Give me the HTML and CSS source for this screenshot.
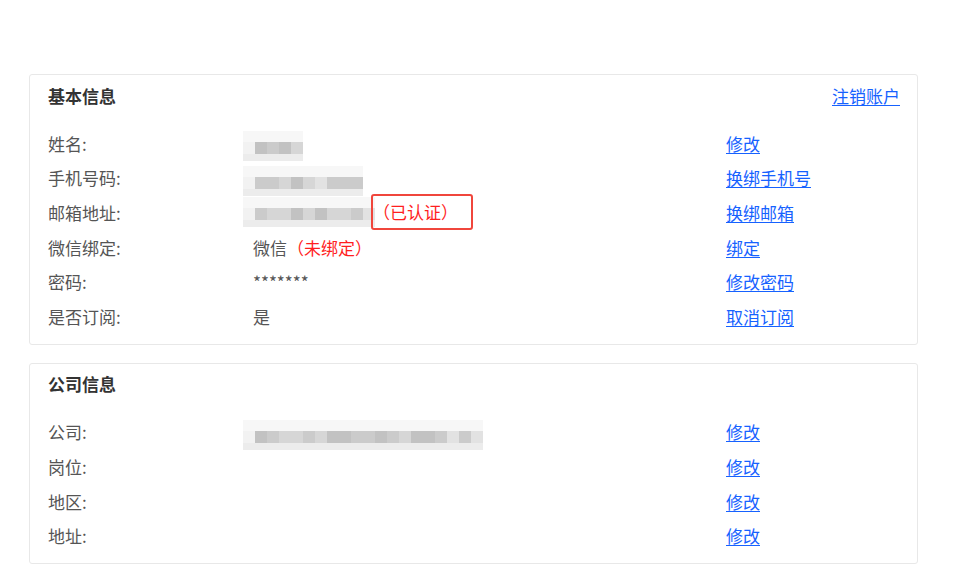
FILE: index.html
```html
<!DOCTYPE html>
<html lang="zh-CN">
  <head>
    <meta charset="UTF-8" />
    <meta name="viewport" content="width=device-width, initial-scale=1.0" />
    <title>账户信息</title>
    <link rel="stylesheet" href="styles.css">
  </head>
  <body>
    <div class="page">
      <!-- 基本信息 -->
      <div class="card">
        <div class="card-head">
          <h2>基本信息</h2>
          <a href="#">注销账户</a>
        </div>
        <div class="rows">
          <div class="label">姓名:</div>
          <div class="value">
            <span class="blur"><i class="g6"></i><i class="g2"></i><i class="g3"></i><i class="g2"></i><i class="g4"></i></span>
          </div>
          <div class="action"><a href="#">修改</a></div>

          <div class="label">手机号码:</div>
          <div class="value">
            <span class="blur"><i class="g6"></i><i class="g3"></i><i class="g3"></i><i class="g4"></i><i class="g2"></i><i class="g4"></i><i class="g5"></i><i class="g3"></i><i class="g3"></i><i class="g3"></i></span>
          </div>
          <div class="action"><a href="#">换绑手机号</a></div>

          <div class="label">邮箱地址:</div>
          <div class="value">
            <span class="blur"><i class="g6"></i><i class="g3"></i><i class="g4"></i><i class="g4"></i><i class="g2"></i><i class="g4"></i><i class="g2"></i><i class="g4"></i><i class="g4"></i><i class="g3"></i><i class="g5"></i></span><span class="verified">（已认证）</span>
          </div>
          <div class="action"><a href="#">换绑邮箱</a></div>

          <div class="label">微信绑定:</div>
          <div class="value">微信<span class="warn">（未绑定）</span></div>
          <div class="action"><a href="#">绑定</a></div>

          <div class="label">密码:</div>
          <div class="value">*******</div>
          <div class="action"><a href="#">修改密码</a></div>

          <div class="label">是否订阅:</div>
          <div class="value">是</div>
          <div class="action"><a href="#">取消订阅</a></div>
        </div>
      </div>

      <!-- 公司信息 -->
      <div class="card">
        <div class="card-head">
          <h2>公司信息</h2>
        </div>
        <div class="rows">
          <div class="label">公司:</div>
          <div class="value">
            <span class="blur"><i class="g6"></i><i class="g2"></i><i class="g3"></i><i class="g4"></i><i class="g4"></i><i class="g3"></i><i class="g4"></i><i class="g2"></i><i class="g2"></i><i class="g3"></i><i class="g3"></i><i class="g2"></i><i class="g3"></i><i class="g4"></i><i class="g2"></i><i class="g2"></i><i class="g3"></i><i class="g5"></i><i class="g3"></i><i class="g5"></i></span>
          </div>
          <div class="action"><a href="#">修改</a></div>

          <div class="label">岗位:</div>
          <div class="value"></div>
          <div class="action"><a href="#">修改</a></div>

          <div class="label">地区:</div>
          <div class="value"></div>
          <div class="action"><a href="#">修改</a></div>

          <div class="label">地址:</div>
          <div class="value"></div>
          <div class="action"><a href="#">修改</a></div>
        </div>
      </div>
    </div>
  </body>
</html>
```

FILE: styles.css
```css
body {
  margin: 0;
  padding: 0;
  background: #fff;
  font-family: "Noto Sans CJK SC", "Noto Sans", sans-serif;
  font-size: 17px;
  color: #555;
}
.page {
  width: 889px;
  padding: 74px 0 0 29px;
}
.card {
  border: 1px solid #e8e8e8;
  border-radius: 3px;
  padding: 9px 17px 10px 18px;
  margin-bottom: 18px;
}
.card-head {
  display: flex;
  justify-content: space-between;
  align-items: center;
  height: 22px;
}
.card-head h2 {
  margin: 0;
  font-size: 17px;
  font-weight: bold;
  color: #333;
}
a {
  color: #1662ff;
  text-decoration: underline;
  text-underline-offset: 2px;
}
.rows {
  display: grid;
  grid-template-columns: 205px 473px 1fr;
  grid-auto-rows: 34.6px;
  align-items: center;
  margin-top: 20px;
}
.value {
  white-space: nowrap;
}
.warn {
  color: #ff1f1f;
}
.verified {
  display: inline-block;
  color: #ff1f1f;
  border: 2px solid #f0463c;
  border-radius: 3px;
  padding: 4px 13px 5px 0;
  margin-left: -4px;
  vertical-align: middle;
  line-height: 23px;
}
.blur {
  display: inline-flex;
  vertical-align: middle;
  margin: -15px 0 -15px -10px;
  height: 30px;
}
.blur i {
  display: block;
  width: 12px;
  height: 30px;
  background: linear-gradient(#f7f7f7 0 11px, var(--g) 11px 23px, #ececec 23px 30px);
}
.g2 { --g: #c2c2c2; }
.g3 { --g: #cbcbcb; }
.g4 { --g: #d6d6d6; }
.g5 { --g: #e2e2e2; }
.g6 { --g: #f2f2f2; }
```
